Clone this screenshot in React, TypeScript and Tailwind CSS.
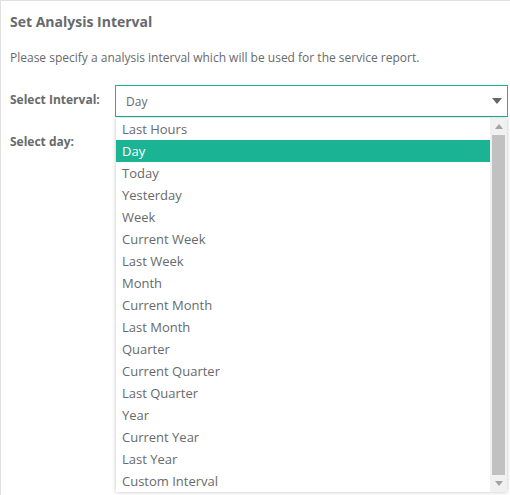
const items = ["Last Hours","Day","Today","Yesterday","Week","Current Week","Last Week","Month","Current Month","Last Month","Quarter","Current Quarter","Last Quarter","Year","Current Year","Last Year","Custom Interval"];

export default function App() {
  return (
    <div className="w-[510px] h-[495px] overflow-hidden bg-white border-t border-l border-[#e0e0e0] text-[#676a6c] font-['Open_Sans',sans-serif] text-[13px] pl-[9px]">
      <h2 className="font-bold text-[14px] leading-[19px] mt-[11px] text-[#676a6c]">Set Analysis Interval</h2>
      <p className="text-[12px] leading-[17px] mt-[18px]">Please specify a analysis interval which will be used for the service report.</p>
      <div className="flex mt-[19px]">
        <label className="w-[105px] font-bold text-[12px] leading-[17px] pt-[6px]">Select Interval:</label>
        <div className="relative w-[393px]">
          <div className="h-[32px] border border-[#1ab394] flex items-center justify-between pl-[10px] pr-[5px] text-[12px]">
            <span className="pt-[1px]">Day</span>
            <svg width="10" height="6" viewBox="0 0 10 6"><path d="M0 0h10L5 6z" fill="#666" /></svg>
          </div>
          <div className="absolute left-px top-[33px] w-[391px] h-[374px] bg-white shadow-[0_0_4px_rgba(0,0,0,0.25)] flex">
            <ul className="flex-1 text-[13px]">
              {items.map((t) => (
                <li key={t} className={`h-[22px] leading-[22px] pl-[6px] ${t === "Day" ? "bg-[#1ab394] text-white" : ""}`}>{t}</li>
              ))}
            </ul>
            <div className="w-[17px] bg-[#f1f1f1] flex flex-col items-center justify-between py-[6px]">
              <svg width="8" height="5" viewBox="0 0 8 5"><path d="M0 5h8L4 0z" fill="#a3a3a3" /></svg>
              <div className="w-[13px] flex-1 bg-[#c1c1c1] my-[6px]" />
              <svg width="8" height="5" viewBox="0 0 8 5"><path d="M0 0h8L4 5z" fill="#a3a3a3" /></svg>
            </div>
          </div>
        </div>
      </div>
      <label className="block font-bold text-[12px] leading-[17px] mt-[16px]">Select day:</label>
    </div>
  );
}
